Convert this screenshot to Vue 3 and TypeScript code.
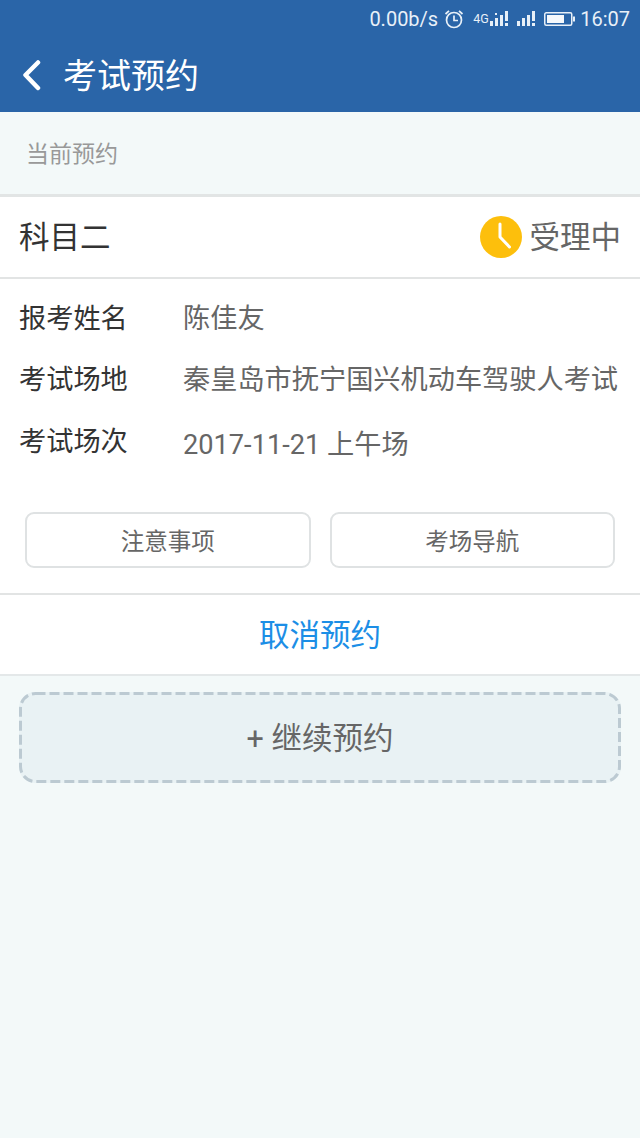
<script setup lang="ts">
const rows = [
  { label: '报考姓名', value: '陈佳友', cls: '' },
  { label: '考试场地', value: '秦皇岛市抚宁国兴机动车驾驶人考试', cls: '' },
  { label: '考试场次', value: '2017-11-21 上午场', cls: 'low' }
]
</script>

<template>
  <div class="page">
    <header class="top">
      <div class="status">
        <span class="speed">0.00b/s</span>
        <svg class="alarm" width="20" height="20" viewBox="0 0 20 20" fill="none" stroke="#e8f0f8" stroke-width="1.700">
          <circle cx="10" cy="11" r="7.500" />
          <path d="M10 6.500v5h4M1.500 5 5 1.800M18.500 5 15 1.800" />
        </svg>
        <span class="net">4G</span>
        <svg class="sig1" width="20" height="17" viewBox="0 0 20 17" fill="#e8f0f8">
          <path d="M1 11h3v5H1zM6 8h3v8H6zM11 5h3v11h-3zM16 1h3v10h-3zM16 13h3v3h-3zM6 3h2v2H6z" />
        </svg>
        <svg class="sig2" width="20" height="17" viewBox="0 0 20 17" fill="#e8f0f8">
          <path d="M1 11h3v5H1zM6 8h3v8H6zM11 5h3v11h-3zM16 1h3v10h-3zM16 13h3v3h-3z" />
        </svg>
        <svg class="batt" width="31" height="16" viewBox="0 0 31 16" fill="none">
          <rect x="0.750" y="1.750" width="27" height="12.500" rx="1.500" stroke="#e8f0f8" stroke-width="1.500" />
          <rect x="3" y="4" width="17" height="8" fill="#f6f9fc" />
          <rect x="29" y="5.500" width="2" height="5" fill="#e8f0f8" />
        </svg>
        <span class="time">16:07</span>
      </div>
      <div class="bar">
        <svg class="back" width="20" height="32" viewBox="0 0 20 32" fill="none" stroke="#fff" stroke-width="4.500" stroke-linecap="round" stroke-linejoin="round">
          <path d="M17 3.500 4.500 16 17 29" />
        </svg>
        <h1>考试预约</h1>
      </div>
    </header>

    <div class="section">当前预约</div>

    <div class="card">
      <div class="head">
        <span class="subject">科目二</span>
        <span class="state">
          <svg width="42" height="42" viewBox="0 0 42 42">
            <circle cx="21" cy="21" r="21" fill="#fdbf0c" />
            <path d="M20 8v13l9.500 10" fill="none" stroke="#fff" stroke-width="3" stroke-linecap="round" stroke-linejoin="round" />
          </svg>
          <span class="state-text">受理中</span>
        </span>
      </div>
      <div class="info">
        <div v-for="row in rows" :key="row.label" class="row" :class="row.cls">
          <span class="label">{{ row.label }}</span>
          <span class="value">{{ row.value }}</span>
        </div>
      </div>
      <div class="actions">
        <button class="btn">注意事项</button>
        <button class="btn">考场导航</button>
      </div>
      <div class="cancel">取消预约</div>
    </div>

    <div class="more">
      <svg class="dash" width="602" height="91" viewBox="0 0 602 91" fill="none">
        <rect x="1.500" y="1.500" width="599" height="88" rx="15" stroke="#bccad2" stroke-width="3" stroke-dasharray="10 4" />
      </svg>
      <span>+ 继续预约</span>
    </div>
  </div>
</template>

<style>
html, body {
  margin: 0;
  background: #f3f9f9;
}
</style>

<style scoped>
.page {
  width: 640px;
  height: 1138px;
  overflow: hidden;
  background: #f3f9f9;
  font-family: "Roboto", "Noto Sans CJK SC", sans-serif;
  color: #555;
}

.top {
  height: 112px;
  background: #2a65a8;
  color: #fff;
}

.status {
  height: 37px;
  padding-right: 10px;
  display: flex;
  align-items: center;
  justify-content: flex-end;
  color: #e8f0f8;
  font-size: 20px;
}

.alarm { margin-left: 7px; }

.net {
  margin-left: 9px;
  width: 16px;
  font-size: 12.500px;
}

.sig2 { margin-left: 7px; }

.batt { margin-left: 8px; }

.time { margin-left: 5px; }

.speed { margin-right: -1px; }

.bar {
  height: 75px;
  padding-left: 21px;
  display: flex;
  align-items: center;
}

.back { margin-right: 22px; }

h1 {
  margin: 0 0 2px;
  font-size: 34px;
  font-weight: 400;
}

.section {
  height: 82px;
  padding: 0 0 3px 26px;
  box-sizing: border-box;
  display: flex;
  align-items: center;
  font-size: 23px;
  color: #999;
}

.card {
  background: #fff;
  border-top: 3px solid #e2e5e5;
  border-bottom: 2px solid #e4e8e9;
}

.head {
  height: 82px;
  padding: 0 19px;
  box-sizing: border-box;
  border-bottom: 2px solid #e2e4e4;
  display: flex;
  align-items: center;
  justify-content: space-between;
}

.subject {
  margin-bottom: 4px;
  font-size: 30.500px;
  color: #333;
}

.state {
  display: flex;
  align-items: center;
  gap: 7.500px;
  font-size: 30.500px;
  color: #666;
}

.state-text { margin-bottom: 4px; }

.info {
  padding: 6px 19px 0;
  display: flex;
  flex-direction: column;
}

.row {
  height: 61px;
  display: flex;
  align-items: center;
  font-size: 27.200px;
}

.row.low .label { margin-top: 2px; }

.row.low .value { margin-top: 8px; }

.label {
  width: 164px;
  color: #333;
}

.value { color: #666; }

.actions {
  margin-top: 44px;
  padding: 0 25px 25px;
  display: flex;
  gap: 19px;
  border-bottom: 2px solid #e2e4e4;
}

.btn {
  flex: 1;
  height: 56px;
  padding: 0;
  background: #fff;
  border: 2px solid #dfe2e3;
  border-radius: 9px;
  font: inherit;
  font-size: 23.500px;
  color: #666;
}

.cancel {
  height: 79px;
  padding-bottom: 4px;
  box-sizing: border-box;
  display: flex;
  align-items: center;
  justify-content: center;
  font-size: 30.500px;
  color: #1c8ee6;
}

.more {
  position: relative;
  margin: 16px 19px 0;
  height: 91px;
  padding-bottom: 4px;
  box-sizing: border-box;
  border-radius: 16px;
  background: #e9f2f4;
  display: flex;
  align-items: center;
  justify-content: center;
  font-size: 30.500px;
  color: #666;
}

.dash {
  position: absolute;
  top: 0;
  left: 0;
}
</style>
